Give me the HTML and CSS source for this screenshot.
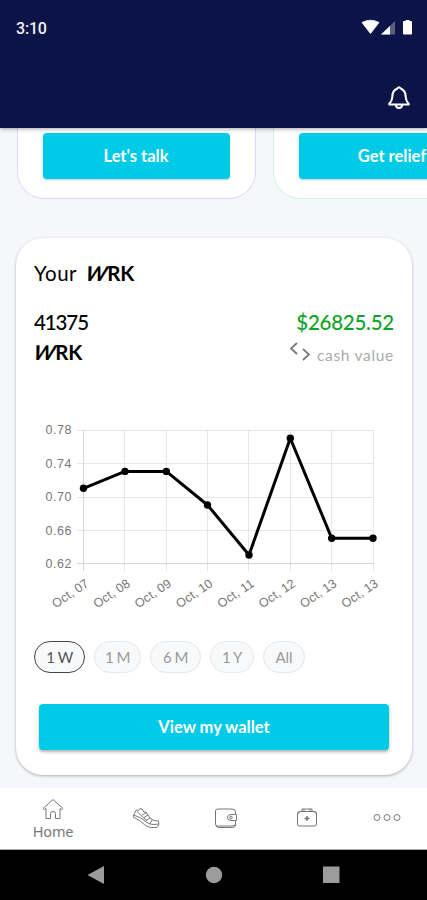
FILE: index.html
```html
<!DOCTYPE html>
<html lang="en">
<head>
    <meta charset="UTF-8">
    <meta name="viewport" content="width=device-width, initial-scale=1.0">
    <title>Wallet</title>
    <link rel="stylesheet" href="styles.css">
</head>
<body>
    <header class="header">
        <div class="status-bar">
            <span class="time">3:10</span>
            <svg class="status-icons" width="52" height="18" viewBox="0 0 52 18">
                <path d="M1 3.500 Q9.500 -1 18 3.500 L9.500 14.500 Z" fill="#fff" stroke="#fff" stroke-width=".8" stroke-linejoin="round"/>
                <path d="M20 15.500 L34 2 V15.500 Z" fill="#596080"/>
                <path d="M20 15.500 L29 7 V15.500 Z" fill="#fff"/>
                <path d="M43 2 h1.500 V1 h4 v1 H50 q1 0 1 1 V14.500 q0 1 -1 1 H43 q-1 0 -1 -1 V3 q0 -1 1 -1 Z" fill="#fff"/>
            </svg>
        </div>
        <svg class="bell" width="24" height="26" viewBox="0 0 24 26" fill="none" stroke="#fff" stroke-width="2" stroke-linejoin="round" stroke-linecap="round">
            <path d="M2.300 19.500 V18.500 Q4.800 16.500 5.300 12 Q5.300 5.500 10.300 3.500 Q12 1 13.700 3.500 Q18.700 5.500 18.700 12 Q19.200 16.500 21.700 18.500 V19.500 Z"/>
            <path d="M9 20 Q9 23 12 23 Q15 23 15 20"/>
        </svg>
    </header>

    <main class="content">
        <div class="offers">
            <div class="offer offer-talk"><a class="button" href="#">Let's talk</a></div>
            <div class="offer offer-relief"><a class="button" href="#">Get relief</a></div>
        </div>

        <section class="wallet">
            <h1 class="title"><span class="your">Your</span><span class="logo"><span class="w">W</span>RK</span></h1>
            <div class="row amounts">
                <span class="tokens">41375</span>
                <span class="cash">$26825.52</span>
            </div>
            <div class="row units">
                <span class="logo"><span class="w">W</span>RK</span>
                <span class="cash-label">
                    <svg width="22" height="20" viewBox="0 0 22 20" fill="none" stroke="#777" stroke-width="1.700">
                        <path d="M8 1 L2 6.500 L8 12"/>
                        <path d="M14 7 L20 12.500 L14 18"/>
                    </svg>
                    <span class="cash-text">cash value</span>
                </span>
            </div>

            <svg class="chart" width="360" height="200" viewBox="0 0 360 200">
                <g class="grid">
                    <path d="M43 10.500 H339 M43 43.500 H339 M43 77.500 H339 M43 110.500 H339"/>
                    <path d="M90.500 10 V151 M132.500 10 V151 M173.500 10 V151 M214.500 10 V151 M256.500 10 V151 M297.500 10 V151 M339.500 10 V151"/>
                    <path class="axis" d="M49.500 10 V151 M43 143.500 H339"/>
                </g>
                <g class="y-labels">
                    <text x="37.500" y="14.300" textLength="26">0.78</text>
                    <text x="37.500" y="47.500" textLength="26">0.74</text>
                    <text x="37.500" y="81" textLength="26">0.70</text>
                    <text x="37.500" y="114.500" textLength="26">0.66</text>
                    <text x="37.500" y="147.500" textLength="26">0.62</text>
                </g>
                <g class="x-labels">
                    <text transform="translate(55.500 165.500) rotate(-34)" textLength="41">Oct, 07</text>
                    <text transform="translate(96.900 165.500) rotate(-34)" textLength="41">Oct, 08</text>
                    <text transform="translate(138.200 165.500) rotate(-34)" textLength="41">Oct, 09</text>
                    <text transform="translate(179.500 165.500) rotate(-34)" textLength="41">Oct, 10</text>
                    <text transform="translate(220.900 165.500) rotate(-34)" textLength="41">Oct, 11</text>
                    <text transform="translate(262.300 165.500) rotate(-34)" textLength="41">Oct, 12</text>
                    <text transform="translate(303.500 165.500) rotate(-34)" textLength="41">Oct, 13</text>
                    <text transform="translate(345 165.500) rotate(-34)" textLength="41">Oct, 13</text>
                </g>
                <polyline class="line" points="49.500,68.300 91,51.400 132.300,51.400 173.500,85 215,135 256.300,18.200 297.700,118.200 339,118.200"/>
                <g class="dots">
                    <circle cx="49.500" cy="68.300" r="3.700"/>
                    <circle cx="91" cy="51.400" r="3.700"/>
                    <circle cx="132.300" cy="51.400" r="3.700"/>
                    <circle cx="173.500" cy="85" r="3.700"/>
                    <circle cx="215" cy="135" r="3.700"/>
                    <circle cx="256.300" cy="18.200" r="3.700"/>
                    <circle cx="297.700" cy="118.200" r="3.700"/>
                    <circle cx="339" cy="118.200" r="3.700"/>
                </g>
            </svg>

            <div class="ranges">
                <span class="range range-week active">1 W</span>
                <span class="range range-month">1 M</span>
                <span class="range range-half">6 M</span>
                <span class="range range-year">1 Y</span>
                <span class="range range-all">All</span>
            </div>
            <a class="button wallet-button" href="#">View my wallet</a>
        </section>
    </main>

    <nav class="tabs">
        <a class="tab tab-home" href="#">
            <svg width="22" height="22" viewBox="0 0 22 22">
                <path d="M1 10.500 L11 1.500 L21 10.500 Q19.500 12.500 18 10.500 V20.500 H13.500 V15.500 Q13.500 13.500 11 13.500 Q8.500 13.500 8.500 15.500 V20.500 H4 V10.500 Q2.500 12.500 1 10.500 Z"/>
            </svg>
            <span class="tab-label">Home</span>
        </a>
        <a class="tab" href="#">
            <svg width="28" height="22" viewBox="0 0 28 22">
                <path d="M4.500 3 Q2 6 1.200 10 Q8 13 13.500 18.500 Q18 21.500 25 20.500 Q28 18 26.500 14 Q21.500 14.500 18 11 L14 5 Q11.500 6.500 10 2 Q7.500 .5 6.500 3.500 Z"/>
                <path d="M1.500 8 Q9 10 15 15.500 Q19 18.500 26.500 17 M5 4.500 L15 14 M10 8 L14 6 M12 10.500 L16 8 M14.500 13 L18 11 M20 13 L18 17"/>
            </svg>
        </a>
        <a class="tab" href="#">
            <svg width="24" height="22" viewBox="0 0 24 22">
                <path d="M4 2 H18 Q21.500 2 21.500 5 V7.500 H17 Q13.500 7.500 13.500 10.500 Q13.500 13.500 17 13.500 H21.500 V17 Q21.500 19 18 19 H3.500 Q1.500 19 1.500 17 V4 Q1.500 2 4 2 Z"/>
                <path d="M21.500 7.500 H22.500 V13.500 H21.500 M2 18.500 Q2.500 20.500 5 20.500 H18 Q21.500 20.500 22 17.500"/>
                <circle cx="17" cy="10.500" r="1.300"/>
            </svg>
        </a>
        <a class="tab" href="#">
            <svg width="22" height="22" viewBox="0 0 22 22">
                <rect x="1.500" y="4.500" width="19" height="14.500" rx="2"/>
                <path d="M6 4.500 V2 H16 V4.500 M8 4.500 V2 M14 4.500 V2 M1.500 7 Q3 6.500 3.500 4.500 M20.500 7 Q19 6.500 18.500 4.500"/>
                <path class="cross" d="M11 9 V14 M8.500 11.500 H13.500"/>
            </svg>
        </a>
        <a class="tab" href="#">
            <svg width="28" height="22" viewBox="0 0 28 22">
                <circle cx="4" cy="10.500" r="3"/>
                <circle cx="14" cy="10.500" r="3"/>
                <circle cx="24" cy="10.500" r="3"/>
            </svg>
        </a>
    </nav>

    <footer class="system-nav">
        <svg width="18" height="20" viewBox="0 0 18 20"><path d="M0.500 10 L17 1 V19 Z"/></svg>
        <svg width="18" height="20" viewBox="0 0 18 20"><circle cx="9" cy="10" r="8.200"/></svg>
        <svg width="18" height="20" viewBox="0 0 18 20"><rect x="1" y="1.500" width="16.500" height="16.500"/></svg>
    </footer>
</body>
</html>
```

FILE: styles.css
```css
* {
    box-sizing: border-box;
}

body {
    display: flex;
    flex-direction: column;
    width: 427px;
    height: 900px;
    margin: 0;
    overflow: hidden;
    background-color: #f5f7fa;
    font-family: Lato, sans-serif;
}

a {
    text-decoration: none;
}

svg {
    display: block;
    flex: none;
}

.header {
    display: flex;
    flex-direction: column;
    flex: none;
    height: 128px;
    background-color: #0c1347;
    box-shadow: 0 1px 4px rgba(0, 0, 0, 0.35);
    z-index: 1;
}

.status-bar {
    display: flex;
    justify-content: space-between;
    padding: 19px 14px 0 16px;
    height: 85px;
}

.time {
    color: #f2f2f2;
    font: 500 16px/19px Roboto, sans-serif;
    letter-spacing: -0.2px;
}

.bell {
    align-self: flex-end;
    margin-right: 16px;
}

.content {
    flex: none;
    height: 659.5px;
}

.offers {
    display: flex;
    gap: 17px;
    height: 71px;
    padding-left: 16.5px;
    overflow: hidden;
}

.offer {
    flex: none;
    width: 239px;
    padding: 5px 25px 0;
    background-color: #fff;
    border: 1px solid #ddd5fb;
    border-top: 0;
    border-radius: 0 0 27px 27px;
}

.offer-relief {
    border-color: #cdf4e5;
}

.button {
    display: block;
    height: 46px;
    border-radius: 4px;
    background-color: #00cbe6;
    box-shadow: 0 1px 2px rgba(0, 90, 110, 0.3);
    color: #fff;
    font-size: 16.5px;
    font-weight: 700;
    line-height: 46px;
    text-align: center;
    white-space: nowrap;
}

.wallet {
    display: flex;
    flex-direction: column;
    width: 396px;
    height: 537px;
    margin: 39px 0 0 16px;
    padding: 23px 18px 0;
    border-radius: 27px;
    background-color: #fff;
    box-shadow: 0 1px 3px rgba(0, 0, 0, 0.3);
}

.title {
    display: flex;
    align-items: center;
    gap: 9px;
    height: 24px;
    margin: 0;
    font-size: 20.5px;
    font-weight: 400;
}

.your {
    letter-spacing: 0.5px;
}

.logo {
    color: #000;
    font-size: 20.5px;
    font-weight: 700;
    line-height: 24px;
    letter-spacing: -0.3px;
}

.w {
    display: inline-block;
    transform: skewX(-18deg);
}

.row {
    display: flex;
    justify-content: space-between;
    align-items: center;
    height: 24px;
}

.amounts {
    margin-top: 25px;
    font-size: 20.5px;
    font-weight: 500;
}

.tokens {
    letter-spacing: -1.1px;
}

.cash {
    color: #0ca424;
    letter-spacing: -0.25px;
}

.units {
    margin-top: 6px;
}

.cash-label {
    display: flex;
    align-items: center;
    gap: 6px;
}

.cash-text {
    padding-top: 5px;
    color: #aaa;
    font-size: 15.5px;
    letter-spacing: 0.7px;
}

.chart {
    margin-top: 56px;
}

.grid {
    fill: none;
    stroke: #e6e6e6;
    stroke-width: 1;
}

.axis {
    stroke: #d6d6d6;
}

.y-labels,
.x-labels {
    fill: #777;
    font-family: "Liberation Sans", Arial, sans-serif;
    font-size: 12.5px;
    text-anchor: end;
}

.line {
    fill: none;
    stroke: #000;
    stroke-width: 3;
    stroke-linejoin: round;
}

.ranges {
    display: flex;
    gap: 9px;
    margin-top: 20.5px;
}

.range {
    height: 32px;
    border: 1px solid #e6e8ea;
    border-radius: 16px;
    background-color: #f8f9fa;
    color: #999;
    font-size: 15px;
    line-height: 30px;
    letter-spacing: -0.5px;
    text-align: center;
}

.range-week {
    width: 51px;
}

.range-month {
    width: 47px;
}

.range-half {
    width: 51px;
}

.range-year {
    width: 44px;
}

.range-all {
    width: 42px;
    letter-spacing: 0;
}

.active {
    border-color: #444;
    color: #555;
}

.wallet-button {
    margin: 31px 5px 0;
    box-shadow: 0 2px 3px rgba(0, 0, 0, 0.3);
}

.tabs {
    display: grid;
    grid-template-columns: 106px repeat(4, 1fr);
    flex: none;
    height: 62px;
    background-color: #fff;
    border-bottom: 1px solid #aaa;
}

.tab {
    display: flex;
    flex-direction: column;
    align-items: center;
    padding-top: 19px;
    color: #777;
}

.tab svg {
    fill: none;
    stroke: #777;
    stroke-width: 1;
    stroke-linejoin: round;
}

.tab .cross {
    stroke-width: 1.5;
}

.tab-home {
    padding-top: 10px;
}

.tab-label {
    font: 14.5px/22px "Noto Sans", sans-serif;
    letter-spacing: -0.2px;
}

.system-nav {
    display: flex;
    justify-content: space-between;
    align-items: center;
    flex: 1;
    padding: 0 87px;
    background-color: #000;
}

.system-nav svg {
    fill: #9c9c9c;
}
```
